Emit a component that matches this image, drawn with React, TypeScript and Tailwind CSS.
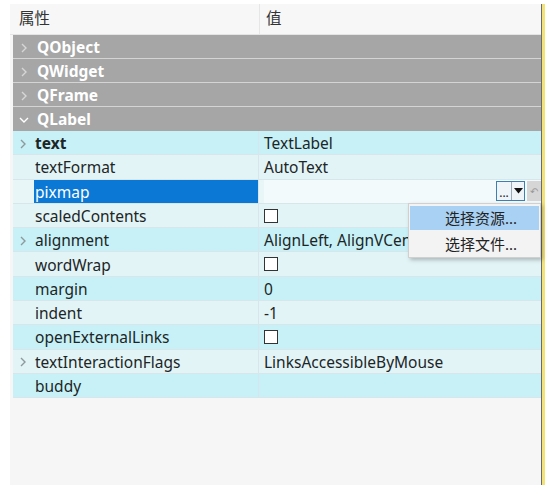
import React from "react";

type Row = {
  name: string;
  value?: string;
  bold?: boolean;
  expand?: boolean;
  check?: boolean;
  editor?: boolean;
};

const rows: Row[] = [
  { name: "text", value: "TextLabel", bold: true, expand: true },
  { name: "textFormat", value: "AutoText" },
  { name: "pixmap", editor: true },
  { name: "scaledContents", check: true },
  { name: "alignment", value: "AlignLeft, AlignVCenter", expand: true },
  { name: "wordWrap", check: true },
  { name: "margin", value: "0" },
  { name: "indent", value: "-1" },
  { name: "openExternalLinks", check: true },
  { name: "textInteractionFlags", value: "LinksAccessibleByMouse", expand: true },
  { name: "buddy" },
];

const groups = ["QObject", "QWidget", "QFrame"];

function Chevron({ down, color }: { down?: boolean; color: string }) {
  return (
    <svg width="12" height="12" viewBox="0 0 12 12" className="shrink-0">
      <path
        d={down ? "M2 4 L6 8 L10 4" : "M4 2 L8 6 L4 10"}
        fill="none"
        stroke={color}
        strokeWidth="1.4"
      />
    </svg>
  );
}

function Checkbox() {
  return <div className="w-[14px] h-[14px] border border-[#333] bg-white" />;
}

export default function App() {
  return (
    <div className="w-[550px] h-[498px] bg-white relative font-['Noto_Sans','Noto_Sans_CJK_SC',sans-serif] text-[15.5px] text-[#1c2626] overflow-hidden">
      <div className="flex pt-[4px] pl-[10px]">
        <div className="w-[531px] h-[481px] bg-[#f6f6f6] flex flex-col">
          {/* header */}
          <div className="h-[31px] flex items-center bg-[#f7f7f7] border-b border-[#e4e4e4]">
            <div className="w-[249px] pl-[9px] text-[#333]">属性</div>
            <div className="pl-[6px] text-[#333] border-l border-[#e6e6e6] h-full flex items-center">值</div>
          </div>
          <div className="ml-[3px] flex flex-col">
            {groups.map((g) => (
              <div
                key={g}
                className="h-[24px] pt-[2px] bg-[#a6a6a6] border-b border-[#d4d4d4] flex items-center pl-[5px] gap-[7px]"
              >
                <Chevron color="#d6d6d6" />
                <span className="text-white font-bold">{g}</span>
              </div>
            ))}
            <div className="h-[24px] pt-[2px] bg-[#a6a6a6] flex items-center pl-[5px] gap-[7px]">
              <Chevron down color="#ffffff" />
              <span className="text-white font-bold">QLabel</span>
            </div>
            {rows.map((r, i) => {
              const dark = i % 2 === 0;
              const bg = dark ? "bg-[#c8f1f7]" : "bg-[#e3f4f7]";
              return (
                <div
                  key={r.name}
                  className={`h-[24.3px] flex border-b border-[#d7e6ea] ${r.editor ? "bg-[#e8f6f8]" : bg}`}
                >
                  <div className="w-[21px] flex items-center pl-[4px] pt-[2px]">
                    {r.expand && <Chevron color="#8c9a9c" />}
                  </div>
                  <div
                    className={`w-[225px] flex items-center pl-[1px] pt-[2px] border-r border-[#d7e6ea] ${
                      r.editor ? "bg-[#0c78d6] text-white" : ""
                    } ${r.bold ? "font-bold" : ""}`}
                  >
                    {r.name}
                  </div>
                  <div className="flex-1 flex items-center pl-[5px] whitespace-nowrap overflow-hidden">
                    <span className="pt-[2px]">{r.value}</span>
                    {r.check && <Checkbox />}
                    {r.editor && (
                      <div className="flex-1 h-full flex items-center justify-end bg-[#f2fafb]">
                        <div className="h-[20px] flex border border-[#3d7fae] bg-[#eef4f7]">
                          <div className="w-[14px] flex items-end justify-center text-[12px] leading-[14px] text-[#222]">
                            ...
                          </div>
                          <div className="w-[13px] border-l border-[#9ab] flex items-center justify-center">
                            <svg width="9" height="6" viewBox="0 0 9 6">
                              <path d="M0 0 H9 L4.5 5.5 Z" fill="#111" />
                            </svg>
                          </div>
                        </div>
                        <div className="w-[14px] h-[20px] ml-[2px] bg-[#d6d6d6] flex items-center justify-center text-[10px] text-[#999]">
                          ↶
                        </div>
                      </div>
                    )}
                  </div>
                </div>
              );
            })}
          </div>
        </div>
        <div className="w-[1px] h-[481px] bg-[#6b6b6b]" />
        <div className="w-[3px] h-[481px] bg-[#f3e27a]" />
      </div>

      {/* context menu */}
      <div className="absolute left-[408px] top-[203px] w-[133px] h-[55px] bg-[#f3f3f3] border border-[#d0d0d0] shadow-[2px_2px_4px_rgba(0,0,0,0.25)] py-[2px] px-[1px] text-[15px] text-[#222]">
        <div className="h-[24px] bg-[#a9d1f3] flex items-center pl-[35px]">选择资源...</div>
        <div className="h-[24px] mt-[2px] flex items-center pl-[35px]">选择文件...</div>
      </div>
    </div>
  );
}
